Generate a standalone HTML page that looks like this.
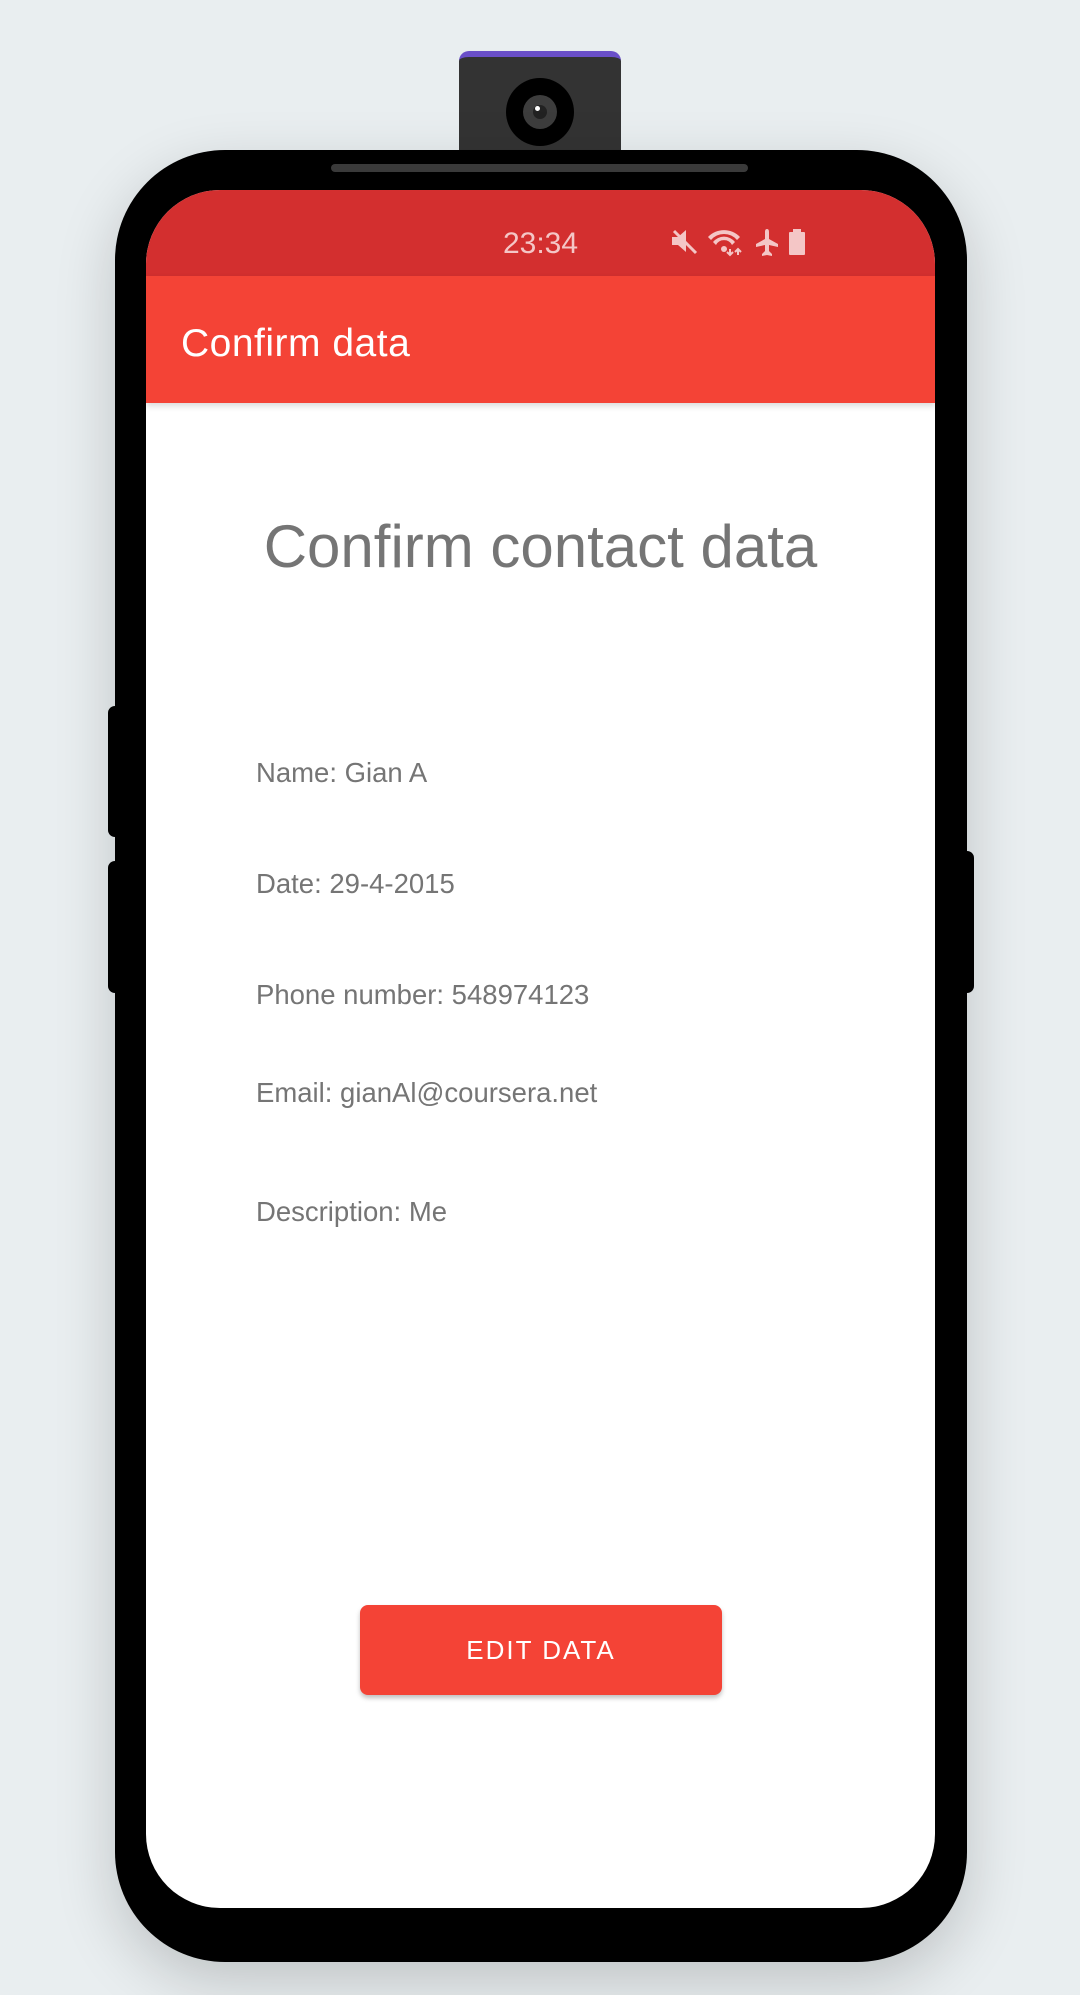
<!DOCTYPE html>
<html><head><meta charset="utf-8"><style>
html,body{margin:0;padding:0}
body{width:1080px;height:1995px;background:#e9eef0;position:relative;overflow:hidden;font-family:"Liberation Sans",sans-serif}
.a{position:absolute}
.phone{left:115px;top:150px;width:852px;height:1812px;background:#000;border-radius:110px;box-shadow:0 20px 60px rgba(0,0,0,.18)}
.screen{left:146px;top:190px;width:789px;height:1718px;background:#fff;border-radius:74px;overflow:hidden}
.status{left:0;top:0;width:789px;height:86px;background:#d32f2f}
.bar{left:0;top:86px;width:789px;height:127px;background:#f44336;box-shadow:0 3px 6px rgba(0,0,0,.15)}
.txt{color:#757575;font-size:27.5px;left:110px}
</style></head><body>
<div class="a" style="left:108px;top:706px;width:14px;height:131px;background:#000;border-radius:8px"></div>
<div class="a" style="left:108px;top:861px;width:14px;height:132px;background:#000;border-radius:8px"></div>
<div class="a" style="left:960px;top:851px;width:14px;height:142px;background:#000;border-radius:8px"></div>
<div class="a" style="left:459px;top:51px;width:162px;height:105px;background:#333;border-radius:10px 10px 0 0;border-top:6px solid #6a4fc9"></div>
<div class="a" style="left:506px;top:78px;width:68px;height:68px;background:#000;border-radius:50%"></div>
<div class="a" style="left:523px;top:95px;width:34px;height:34px;background:#3d3d3d;border-radius:50%"></div>
<div class="a" style="left:533px;top:105px;width:14px;height:14px;background:#222;border-radius:50%"></div>
<div class="a" style="left:535px;top:106px;width:5px;height:5px;background:#fff;border-radius:50%"></div>
<div class="a phone"></div>
<div class="a" style="left:331px;top:164px;width:417px;height:8px;background:#3a3a3a;border-radius:4px"></div>
<div class="a screen">
 <div class="a status"></div>
 <div class="a" style="left:0;top:37px;width:789px;text-align:center;color:#f4c6c6;font-size:30px">23:34</div>
 <svg class="a" style="left:526px;top:39px" width="140" height="28" viewBox="0 0 140 28" fill="#f4c6c6">
  <path d="M0 8h6l8-7v22l-8-7H0z"/><path d="M2 2l22 22" stroke="#f4c6c6" stroke-width="3"/>
  <path d="M36 8a22 22 0 0 1 32 0l-3 3a17 17 0 0 0-26 0z M41 13a14 14 0 0 1 22 0l-3 3a9 9 0 0 0-16 0z"/><circle cx="52" cy="20" r="3"/>
  <path d="M58 20v6M55 23l3 3 3-3M66 26v-6M63 23l3-3 3 3" stroke="#f4c6c6" stroke-width="2" fill="none"/>
  <path d="M95 0c2 0 2 2 2 4v6l9 5v3l-9-2v6l3 3v2l-5-1-5 1v-2l3-3v-6l-9 2v-3l9-5V4c0-2 0-4 2-4z"/>
  <rect x="117" y="3" width="16" height="23" rx="1"/><rect x="121" y="0" width="8" height="4"/>
 </svg>
 <div class="a bar"></div>
 <div class="a" style="left:35px;top:132px;color:#fff;font-size:39px;letter-spacing:0.5px">Confirm data</div>
 <div class="a" style="left:0;top:322px;width:789px;text-align:center;color:#757575;font-size:60px">Confirm contact data</div>
 <div class="a txt" style="top:567px">Name: Gian A</div>
 <div class="a txt" style="top:678px">Date: 29-4-2015</div>
 <div class="a txt" style="top:789px">Phone number: 548974123</div>
 <div class="a txt" style="top:887px">Email: gianAl@coursera.net</div>
 <div class="a txt" style="top:1006px">Description: Me</div>
 <div class="a" style="left:214px;top:1415px;width:362px;height:90px;background:#f44336;border-radius:8px;box-shadow:0 3px 5px rgba(0,0,0,.25);color:#fff;font-size:26px;letter-spacing:2px;text-align:center;line-height:90px">EDIT DATA</div>
</div>
</body></html>
